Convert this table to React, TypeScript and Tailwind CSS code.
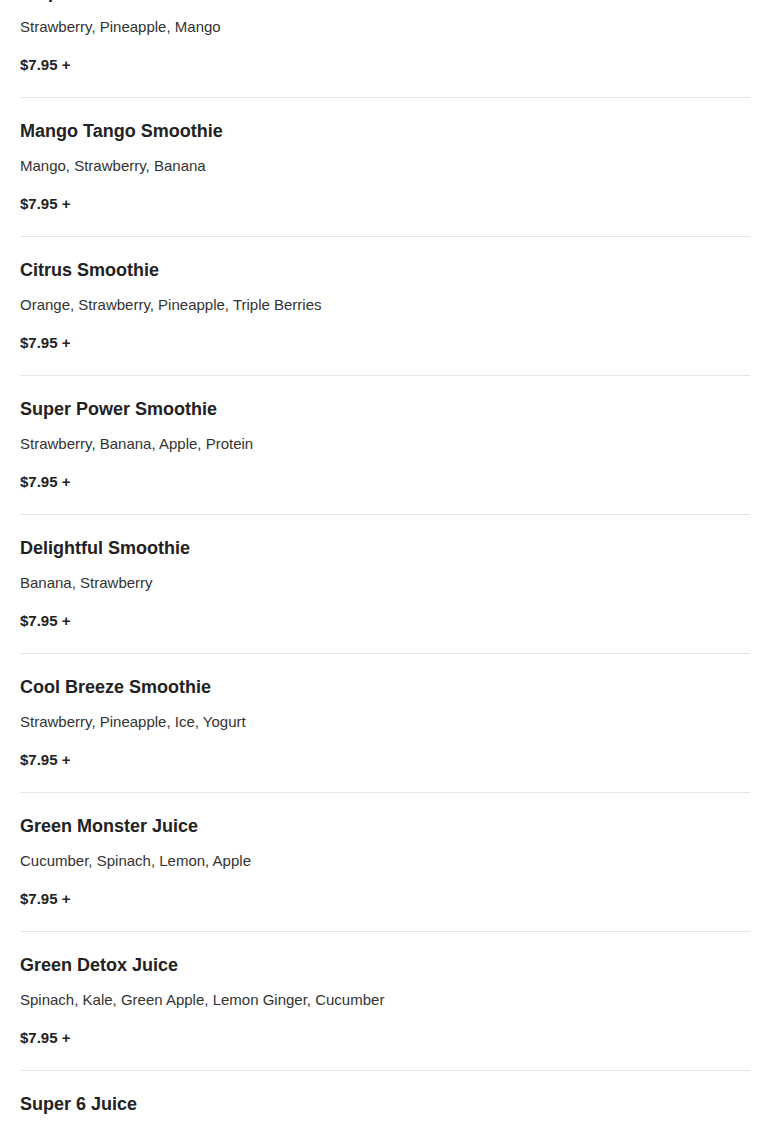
const items = [
  { name: "Tropical Paradise Smoothie", desc: "Strawberry, Pineapple, Mango" },
  { name: "Mango Tango Smoothie", desc: "Mango, Strawberry, Banana" },
  { name: "Citrus Smoothie", desc: "Orange, Strawberry, Pineapple, Triple Berries" },
  { name: "Super Power Smoothie", desc: "Strawberry, Banana, Apple, Protein" },
  { name: "Delightful Smoothie", desc: "Banana, Strawberry" },
  { name: "Cool Breeze Smoothie", desc: "Strawberry, Pineapple, Ice, Yogurt" },
  { name: "Green Monster Juice", desc: "Cucumber, Spinach, Lemon, Apple" },
  { name: "Green Detox Juice", desc: "Spinach, Kale, Green Apple, Lemon Ginger, Cucumber" },
  { name: "Super 6 Juice", desc: "Carrot, Apple, Orange, Celery, Beet, Ginger" },
];

export default function App() {
  return (
    <div className="h-[1131px] overflow-hidden bg-white font-['Liberation_Sans',Arial,sans-serif] text-[#333]">
      <div className="mt-[-41px] px-5">
        {items.map((item) => (
          <div key={item.name} className="border-b border-[#e5e5e5] pt-[21px] pb-[22px]">
            <h3 className="text-[18px] leading-6 font-bold text-[#222]">{item.name}</h3>
            <p className="mt-[13px] text-[15px] leading-5">{item.desc}</p>
            <p className="mt-[18px] text-[15px] leading-5 font-bold text-[#222]">$7.95 +</p>
          </div>
        ))}
      </div>
    </div>
  );
}
